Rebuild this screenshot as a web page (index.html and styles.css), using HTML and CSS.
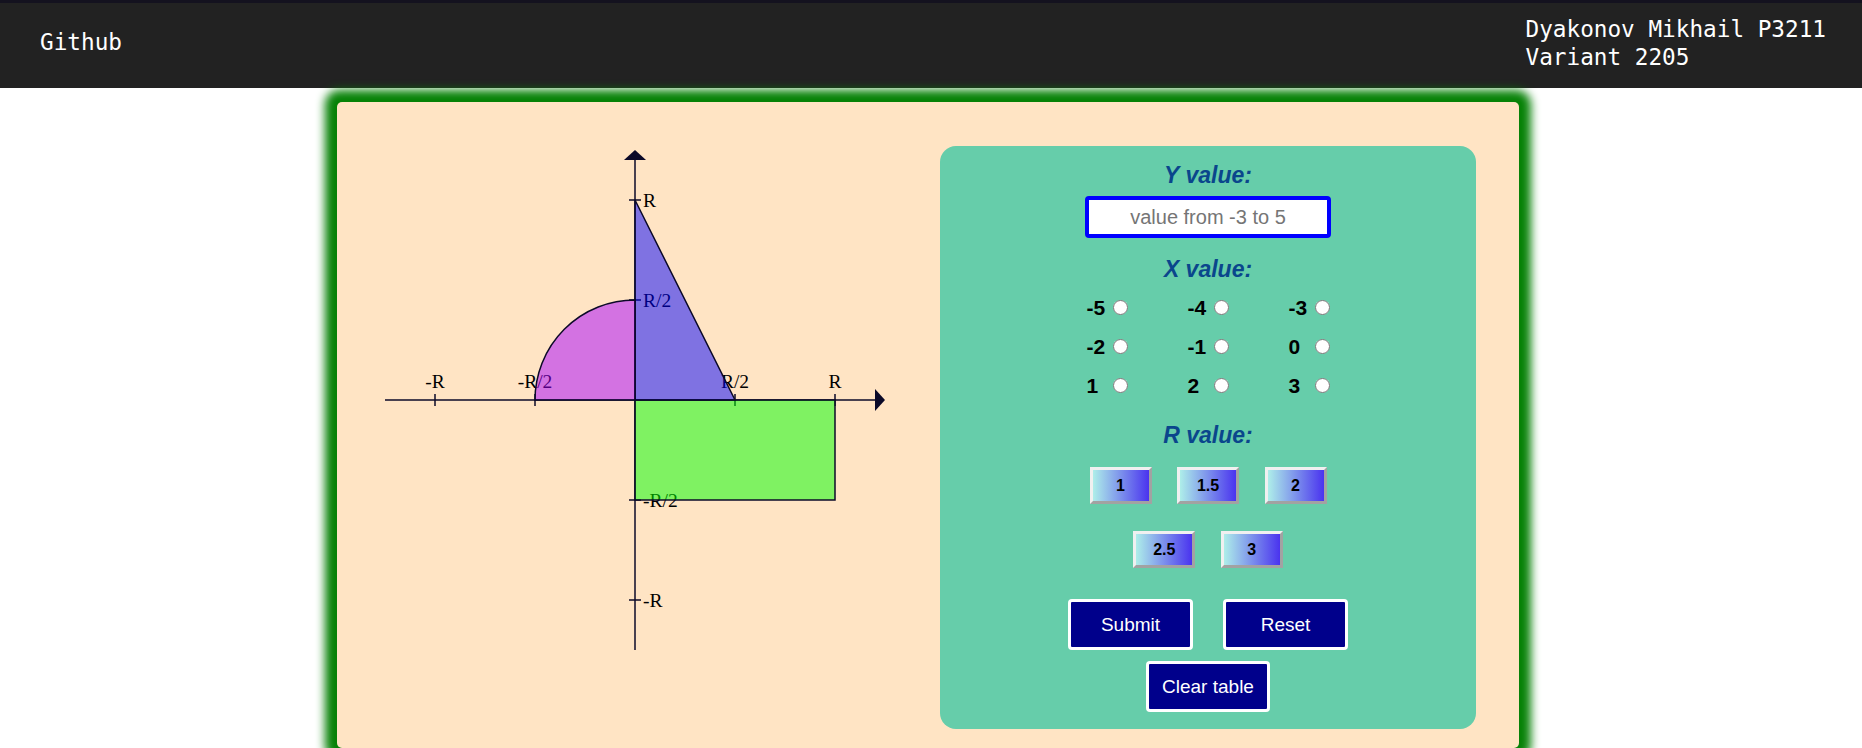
FILE: index.html
```html
<!DOCTYPE html>
<html lang="en">
<head>
<meta charset="utf-8">
<title>Lab 2205</title>
<link rel="stylesheet" href="styles.css">
</head>
<body>
<header class="topbar">
  <div class="brand">Github</div>
  <div class="author">Dyakonov Mikhail P3211<br>Variant 2205</div>
</header>
<main class="card">
  <svg class="graph" width="500" height="500" viewBox="0 0 500 500">
    <g class="axis">
      <line x1="0" y1="250" x2="492" y2="250"/>
      <line x1="250" y1="500" x2="250" y2="8"/>
      <line x1="50" y1="244" x2="50" y2="256"/>
      <line x1="150" y1="244" x2="150" y2="256"/>
      <line x1="350" y1="244" x2="350" y2="256"/>
      <line x1="450" y1="244" x2="450" y2="256"/>
      <line x1="244" y1="50" x2="256" y2="50"/>
      <line x1="244" y1="150" x2="256" y2="150"/>
      <line x1="244" y1="350" x2="256" y2="350"/>
      <line x1="244" y1="450" x2="256" y2="450"/>
    </g>
    <polygon class="arrow" points="500,250 490,239 490,261"/>
    <polygon class="arrow" points="250,0 239,10 261,10"/>
    <g class="labels">
      <text class="mid" x="50" y="238">-R</text>
      <text class="mid" x="150" y="238">-R/2</text>
      <text class="mid" x="350" y="238">R/2</text>
      <text class="mid" x="450" y="238">R</text>
      <text x="258" y="57">R</text>
      <text x="258" y="157">R/2</text>
      <text x="258" y="357">-R/2</text>
      <text x="258" y="457">-R</text>
    </g>
    <rect class="shape rect" x="250" y="250" width="200" height="100"/>
    <polygon class="shape tri" points="250,50 350,250 250,250"/>
    <path class="shape quarter" d="M250,250 L150,250 A100,100 0 0,1 250,150 Z"/>
  </svg>
  <form class="panel">
    <div class="label">Y value:</div>
    <input class="y-input" type="text" placeholder="value from -3 to 5">
    <div class="label label-x">X value:</div>
    <div class="x-grid">
      <label class="x-cell"><span>-5</span><input type="radio" name="x"></label>
      <label class="x-cell"><span>-4</span><input type="radio" name="x"></label>
      <label class="x-cell"><span>-3</span><input type="radio" name="x"></label>
      <label class="x-cell"><span>-2</span><input type="radio" name="x"></label>
      <label class="x-cell"><span>-1</span><input type="radio" name="x"></label>
      <label class="x-cell"><span>0</span><input type="radio" name="x"></label>
      <label class="x-cell"><span>1</span><input type="radio" name="x"></label>
      <label class="x-cell"><span>2</span><input type="radio" name="x"></label>
      <label class="x-cell"><span>3</span><input type="radio" name="x"></label>
    </div>
    <div class="label label-r">R value:</div>
    <div class="r-row">
      <button type="button" class="r-btn">1</button>
      <button type="button" class="r-btn">1.5</button>
      <button type="button" class="r-btn">2</button>
    </div>
    <div class="r-row r-row2">
      <button type="button" class="r-btn">2.5</button>
      <button type="button" class="r-btn">3</button>
    </div>
    <div class="act-row">
      <button type="button" class="act-btn">Submit</button>
      <button type="button" class="act-btn">Reset</button>
    </div>
    <div class="act-row act-row2">
      <button type="button" class="act-btn">Clear table</button>
    </div>
  </form>
</main>
</body>
</html>
```

FILE: styles.css
```css
html, body {
  margin: 0;
  padding: 0;
  background: #ffffff;
  font-family: "Liberation Sans", Arial, sans-serif;
}

.topbar {
  display: flex;
  justify-content: space-between;
  align-items: flex-start;
  height: 85px;
  border-top: 3px solid #14121f;
  background: #222222;
  color: #ffffff;
  font-family: "DejaVu Sans Mono", monospace;
  font-size: 22.7px;
  line-height: 28.3px;
  padding: 0 36px 0 40px;
}

.brand {
  margin-top: 25px;
}

.author {
  margin-top: 12px;
}

.card {
  width: 1182px;
  box-sizing: border-box;
  margin: 14px 0 0 337px;
  padding: 44px 43px 19px 48px;
  background: #ffe4c4;
  border-radius: 5px;
  box-shadow: 0 0 10px 12px #078207;
  display: flex;
  gap: 55px;
  align-items: flex-start;
}

.graph {
  display: block;
  flex: none;
  margin-top: 4px;
}

.axis line {
  stroke: #0c0a28;
  stroke-width: 1.5;
}

.arrow {
  fill: #0a0828;
}

.labels text {
  font-family: "Liberation Serif", "Times New Roman", serif;
  font-size: 19.5px;
  fill: #000000;
}

.labels .mid {
  text-anchor: middle;
}

.shape {
  fill-opacity: 0.5;
  stroke: #0c0a28;
  stroke-width: 1.5;
}

.rect {
  fill: #00ff00;
}

.tri {
  fill: #0000ff;
}

.quarter {
  fill: #a800ff;
}

.panel {
  width: 536px;
  box-sizing: border-box;
  background: #66cdaa;
  border-radius: 16px;
  padding: 16px 0 17px;
  display: flex;
  flex-direction: column;
  align-items: center;
}

.label {
  font-family: "Liberation Sans", Arial, sans-serif;
  font-style: italic;
  font-weight: bold;
  font-size: 23px;
  line-height: 26px;
  color: #0a468c;
}

.y-input {
  margin: 8px 0 0;
  width: 246px;
  height: 42px;
  box-sizing: border-box;
  border: 4px solid #0000ff;
  border-radius: 4px;
  background: #ffffff;
  text-align: center;
  font-family: "Liberation Sans", Arial, sans-serif;
  font-size: 20px;
  padding: 0;
  outline: none;
}

.y-input::placeholder {
  color: #757575;
}

.label-x {
  margin-top: 18px;
}

.x-grid {
  margin-top: 6px;
  display: grid;
  grid-template-columns: repeat(3, 41px);
  column-gap: 60px;
  grid-auto-rows: 39px;
}

.x-cell {
  display: flex;
  align-items: center;
  font-family: "Liberation Sans", Arial, sans-serif;
  font-weight: bold;
  font-size: 21px;
  color: #000000;
}

.x-cell span {
  width: 26px;
}

.x-cell input {
  margin: 0;
  width: 15px;
  height: 15px;
}

.label-r {
  margin-top: 17px;
}

.r-row {
  display: flex;
  gap: 25.5px;
  margin-top: 19px;
}

.r-row2 {
  margin-top: 27px;
}

.r-btn {
  width: 62px;
  height: 37px;
  box-sizing: border-box;
  border: 3px solid;
  border-color: #f0f0f0 #a2a2a2 #a2a2a2 #f0f0f0;
  background: linear-gradient(to right, #aeeee9, #4a33ef);
  font-family: "Liberation Sans", Arial, sans-serif;
  font-weight: bold;
  font-size: 16px;
  color: #000000;
  padding: 0;
}

.act-row {
  display: flex;
  gap: 30.5px;
  margin-top: 31px;
}

.act-row2 {
  margin-top: 11px;
}

.act-btn {
  width: 124.5px;
  height: 51px;
  box-sizing: border-box;
  background: #00008b;
  color: #ffffff;
  border: 3px solid #ffffff;
  border-radius: 4px;
  font-family: "Liberation Sans", Arial, sans-serif;
  font-size: 19px;
  padding: 0;
}
```
